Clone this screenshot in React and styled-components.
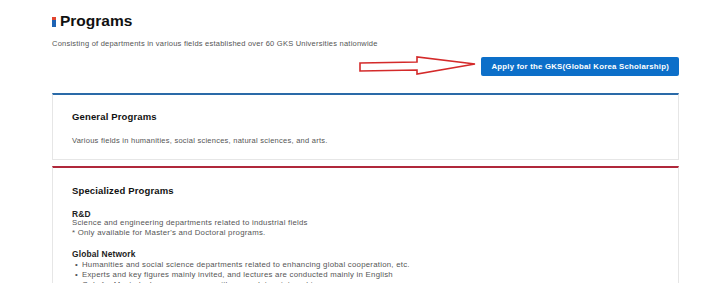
import React from "react";
import styled, { createGlobalStyle } from "styled-components";

const GlobalStyle = createGlobalStyle`
  body {
    margin: 0;
    background: #fff;
    font-family: "Liberation Sans", Arial, sans-serif;
  }
`;

const Page = styled.div`
  padding: 11px 45px 0 52px;
  height: 283px;
  overflow: hidden;
  box-sizing: border-box;
`;

const TitleRow = styled.h1`
  display: flex;
  align-items: center;
  gap: 4px;
  margin: 0;
  font-size: 15.5px;
  font-weight: 700;
  color: #111;
  line-height: 20px;
`;

const Mark = styled.span`
  width: 4px;
  height: 10px;
  margin-top: 2px;
  background: linear-gradient(#e2452f 0 35%, #1e63b4 35% 100%);
`;

const Lead = styled.p`
  margin: 8px 0 0;
  font-size: 7.5px;
  letter-spacing: 0.23px;
  color: #555;
  line-height: 10px;
`;

const ActionRow = styled.div`
  display: flex;
  justify-content: flex-end;
  align-items: center;
  gap: 4px;
  margin-top: 6px;
`;

const ApplyButton = styled.button`
  height: 19px;
  padding: 0 10px;
  border: 0;
  border-radius: 2px;
  background: #0c6fc9;
  color: #fff;
  font-family: "Liberation Sans", Arial, sans-serif;
  font-size: 7.8px;
  letter-spacing: 0.23px;
  font-weight: 700;
  white-space: nowrap;
`;

const Card = styled.section`
  border: 1px solid #e6e6e6;
  border-top: 2px solid ${(p) => p.$accent};
  background: #fff;
  padding: ${(p) => p.$pad};
  margin-top: ${(p) => p.$top};
`;

const CardTitle = styled.h2`
  margin: 0;
  font-size: 9.5px;
  letter-spacing: 0.15px;
  font-weight: 700;
  color: #111;
  line-height: 12px;
`;

const CardText = styled.p`
  margin: 13px 0 0;
  font-size: 7.5px;
  letter-spacing: 0.25px;
  color: #555;
  line-height: 10px;
`;

const Group = styled.div`
  margin-top: ${(p) => p.$top};
`;

const GroupTitle = styled.h3`
  margin: 0;
  font-size: 8.4px;
  letter-spacing: 0.15px;
  font-weight: 700;
  color: #222;
  line-height: 8px;
`;

const Line = styled.div`
  font-size: 7.8px;
  letter-spacing: 0.25px;
  color: #555;
  line-height: 10px;
`;

const Bullets = styled.ul`
  margin: 2px 0 0;
  padding: 0 0 0 3px;
  list-style: none;
`;

const Bullet = styled.li`
  font-size: 7.8px;
  letter-spacing: 0.25px;
  color: #555;
  line-height: 10px;
  &::before {
    content: "•";
    margin-right: 4px;
  }
`;

const Arrow = () => (
  <svg width="120" height="22" viewBox="0 0 120 22">
    <polygon
      points="3,8 60,7 60,2 118,9 60,19 60,15 3,16"
      fill="#fff"
      stroke="#d42a2a"
      strokeWidth="1.6"
    />
  </svg>
);

export default function App() {
  return (
    <>
      <GlobalStyle />
      <Page>
        <TitleRow>
          <Mark />
          Programs
        </TitleRow>
        <Lead>
          Consisting of departments in various fields established over 60 GKS
          Universities nationwide
        </Lead>
        <ActionRow>
          <Arrow />
          <ApplyButton>Apply for the GKS(Global Korea Scholarship)</ApplyButton>
        </ActionRow>
        <Card $accent="#2a6aa8" $pad="16px 19px 13px" $top="16px">
          <CardTitle>General Programs</CardTitle>
          <CardText>
            Various fields in humanities, social sciences, natural sciences, and
            arts.
          </CardText>
        </Card>
        <Card $accent="#b0283b" $pad="17px 19px 10px" $top="6px">
          <CardTitle>Specialized Programs</CardTitle>
          <Group $top="13px">
            <GroupTitle>R&amp;D</GroupTitle>
            <Line>Science and engineering departments related to industrial fields</Line>
            <Line>* Only available for Master's and Doctoral programs.</Line>
          </Group>
          <Group $top="12px">
            <GroupTitle>Global Network</GroupTitle>
            <Bullets>
              <Bullet>
                Humanities and social science departments related to enhancing
                global cooperation, etc.
              </Bullet>
              <Bullet>
                Experts and key figures mainly invited, and lectures are
                conducted mainly in English
              </Bullet>
              <Bullet>
                Only for Master's degree programs, with a mandatory internship
              </Bullet>
            </Bullets>
          </Group>
        </Card>
      </Page>
    </>
  );
}
